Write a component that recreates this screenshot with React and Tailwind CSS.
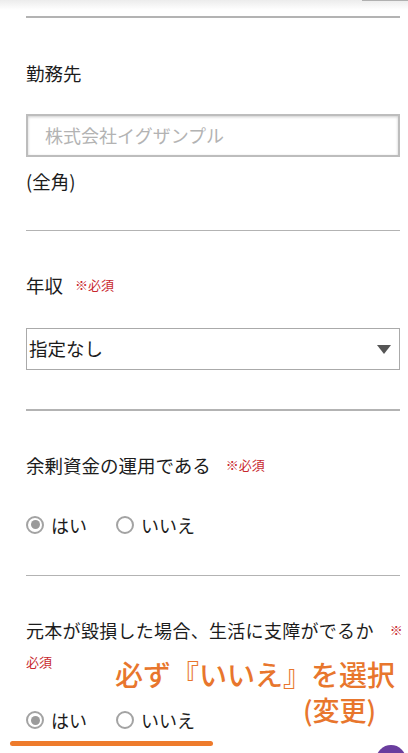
import React from 'react'

const font = { fontFamily: '"Noto Sans CJK JP", "Noto Sans", sans-serif' }

function Required({ className = '' }) {
  return <span className={`text-[13px] text-[#c8282e] ${className}`}>※必須</span>
}

function Radio({ label, checked }) {
  return (
    <label className="flex items-center gap-[7px]">
      <span className="flex h-[18px] w-[18px] items-center justify-center rounded-full border-2 border-[#a3a3a3] bg-white">
        {checked && <span className="h-[9px] w-[9px] rounded-full bg-[#9b9b9b]" />}
      </span>
      <span className="text-[18px] leading-[26px] text-[#1c1c1c]">{label}</span>
    </label>
  )
}

function RadioRow({ className = '' }) {
  return (
    <div className={`flex h-[26px] items-center gap-[29px] ${className}`}>
      <Radio label="はい" checked />
      <Radio label="いいえ" />
    </div>
  )
}

export default function App() {
  return (
    <div className="relative h-[753px] w-[408px] overflow-hidden bg-white" style={font}>
      <div className="absolute left-0 top-0 h-[10px] w-full bg-gradient-to-b from-[#ececec] to-white" />
      <div className="absolute right-0 top-0 h-px w-[46px] bg-[#b0b0b0]" />

      <div className="relative pl-[26px] pr-[8px] pt-[16px] text-[#1c1c1c]">
        <div className="h-[1.5px] bg-[#b3b3b3]" />

        {/* 勤務先 */}
        <p className="mt-[42px] text-[18.5px] leading-[26px]">勤務先</p>
        <div className="mt-[28px] flex h-[43px] items-center border-2 border-[#bdbdbd] pl-[17px] shadow-[inset_0_1px_3px_rgba(0,0,0,0.2)]">
          <span className="text-[18px] text-[#b3b3b3]">株式会社イグザンプル</span>
        </div>
        <p className="mt-[11px] text-[18.5px] leading-[26px]">(全角)</p>
        <div className="mt-[36px] h-[1.5px] bg-[#b3b3b3]" />

        {/* 年収 */}
        <p className="mt-[41px] flex items-center gap-[12px] text-[18.5px] leading-[26px]">
          年収 <Required />
        </p>
        <div className="mt-[30px] flex h-[42px] items-center justify-between border-[1.5px] border-[#aaaaaa] pl-[2px] pr-[8px]">
          <span className="text-[18.5px]">指定なし</span>
          <svg width="14" height="9" viewBox="0 0 14 9">
            <path d="M0 0 L14 0 L7 9 Z" fill="#555" />
          </svg>
        </div>
        <div className="mt-[39px] h-[1.5px] bg-[#b3b3b3]" />

        {/* 余剰資金 */}
        <p className="mt-[41px] flex items-center gap-[15px] text-[18.5px] leading-[26px]">
          余剰資金の運用である <Required />
        </p>
        <RadioRow className="mt-[34px]" />
        <div className="mt-[37px] h-[1.5px] bg-[#b3b3b3]" />

        {/* 元本 */}
        <div className="mt-[38px] text-[18px] leading-[32px]">
          <div className="flex items-center whitespace-nowrap">
            <span className="tracking-[0.3px]">元本が毀損した場合、生活に支障がでるか</span>
            <span className="ml-[16px] text-[13px] text-[#c8282e]">※</span>
          </div>
          <div className="text-[13px] text-[#c8282e]">必須</div>
        </div>
        <RadioRow className="mt-[29px]" />
      </div>

      {/* annotation */}
      <div className="absolute left-[115px] top-[660px] whitespace-nowrap text-[28px] font-medium leading-none text-[#e8762d]">
        必ず『いいえ』を選択
      </div>
      <div className="absolute left-[303px] top-[696px] whitespace-nowrap text-[27px] font-medium leading-none text-[#e8762d]">
        (変更)
      </div>
      <div className="absolute left-[10px] top-[741px] h-[5px] w-[203px] rounded-full bg-[#ee7b2c]" />
      <div className="absolute left-[376px] top-[745px] h-[30px] w-[30px] rounded-full bg-[#6a3d9e]" />
    </div>
  )
}
